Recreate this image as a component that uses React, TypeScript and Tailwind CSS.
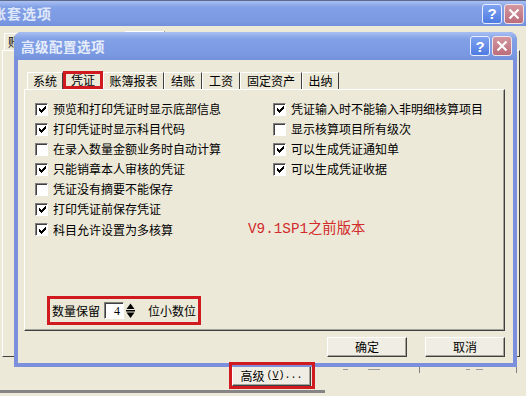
const leftItems = [
  { label: '预览和打印凭证时显示底部信息', on: true },
  { label: '打印凭证时显示科目代码', on: true },
  { label: '在录入数量金额业务时自动计算', on: false },
  { label: '只能销章本人审核的凭证', on: true },
  { label: '凭证没有摘要不能保存', on: false },
  { label: '打印凭证前保存凭证', on: true },
  { label: '科目允许设置为多核算', on: true },
];

const rightItems = [
  { label: '凭证输入时不能输入非明细核算项目', on: true },
  { label: '显示核算项目所有级次', on: false },
  { label: '可以生成凭证通知单', on: true },
  { label: '可以生成凭证收据', on: true },
];

const tabs = [
  { name: '系统', w: 'w-[36px]' },
  { name: '凭证', w: 'w-[40px]', active: true },
  { name: '账簿报表', w: 'w-[61px]' },
  { name: '结账', w: 'w-[38px]' },
  { name: '工资', w: 'w-[38px]' },
  { name: '固定资产', w: 'w-[62px]' },
  { name: '出纳', w: 'w-[37px]' },
];

function CheckBox({ on }: { on: boolean }) {
  return (
    <span className="flex h-[13px] w-[13px] shrink-0 items-center justify-center border border-t-[#808080] border-l-[#808080] border-r-white border-b-white bg-white shadow-[inset_1px_1px_0_#404040]">
      {on && (
        <svg width="7" height="7" viewBox="0 0 7 7" shapeRendering="crispEdges" className="ml-[1px] mt-[1px]">
          <rect x="6" y="0" width="1" height="1" />
          <rect x="5" y="1" width="2" height="1" />
          <rect x="0" y="2" width="1" height="1" />
          <rect x="4" y="2" width="3" height="1" />
          <rect x="0" y="3" width="2" height="1" />
          <rect x="3" y="3" width="3" height="1" />
          <rect x="0" y="4" width="5" height="1" />
          <rect x="1" y="5" width="3" height="1" />
          <rect x="2" y="6" width="1" height="1" />
        </svg>
      )}
    </span>
  );
}

function CheckRow({ label, on }: { label: string; on: boolean }) {
  return (
    <div className="flex h-[20px] items-center gap-[5px] whitespace-nowrap">
      <CheckBox on={on} />
      <span>{label}</span>
    </div>
  );
}

function CaptionButtons() {
  return (
    <div className="flex gap-[2px]">
      <div className="flex h-[20px] w-[20px] items-center justify-center rounded-[3px] border border-[#e8eefc] bg-[linear-gradient(#7fa3f0,#4f7be2)] font-['Liberation_Sans',sans-serif] text-[15px] font-bold leading-none text-white">
        ?
      </div>
      <div className="flex h-[20px] w-[20px] items-center justify-center rounded-[3px] border border-[#f0e4e8] bg-[linear-gradient(#d397a0,#bb6d7a)]">
        <svg width="12" height="12" viewBox="0 0 12 12">
          <path d="M1.5 1.5 L10.5 10.5 M10.5 1.5 L1.5 10.5" stroke="#fff" strokeWidth="2.2" />
        </svg>
      </div>
    </div>
  );
}

function PlainButton({ label }: { label: string }) {
  return (
    <div className="flex h-[20px] w-[80px] items-center justify-center border border-t-white border-l-white border-r-[#404040] border-b-[#404040] bg-[#f0eee4] shadow-[inset_-1px_-1px_0_#a6a49a]">
      {label}
    </div>
  );
}

export default function App() {
  return (
    <div className="relative h-[396px] w-[526px] overflow-hidden bg-[#ece9d8] font-['Noto_Sans_CJK_SC',sans-serif] text-[12px] text-black">
      {/* outer window, inactive */}
      <div className="flex h-full flex-col">
        <div className="flex h-[26px] items-center justify-between border-t border-[#5f6b8c] bg-[linear-gradient(#a9c0f3,#82a0e6_25%,#7b99e2_80%,#7390dc)] pr-[2px]">
          <span className="ml-[-8px] text-[14px] font-bold tracking-[1px] text-[#dfe7fa]">账套选项</span>
          <CaptionButtons />
        </div>

        <div className="flex h-[24px] items-end">
          <div className="ml-[4px] flex h-[17px] w-[121px] items-center border-l border-t border-white pl-[3px]">
            账
          </div>
          <div className="h-[19px] w-[40px] border-t border-r border-t-white border-r-[#404040]" />
        </div>

        <div className="ml-[2px] h-[307px] w-[518px] border border-t-white border-l-white border-r-[#404040] border-b-[#404040]" />

        <div className="mt-[8px] flex items-start">
          <div className="ml-[232px] flex h-[21px] w-[79px] items-center justify-center border border-t-white border-l-white border-r-[#404040] border-b-[#404040] bg-[#f0eee4] shadow-[inset_-1px_-1px_0_#a6a49a]">
            <span>高级</span>
            <span className="ml-[2px] font-['Liberation_Mono',monospace] text-[10px]">
              (<span className="underline">V</span>)...
            </span>
          </div>
          <div className="ml-[31px] mt-[2px] flex h-[6px]">
            <div className="relative h-[6px] w-[78px] border-r border-[#808080]">
              <span className="absolute left-[1px] top-[2px] h-[1px] w-[5px] bg-[#9a9a9a]" />
              <span className="absolute left-[26px] top-[2px] h-[1px] w-[12px] bg-[#9a9a9a]" />
            </div>
            <div className="relative h-[6px] w-[97px] border-r border-[#808080]">
              <span className="absolute left-[46px] top-[2px] h-[1px] w-[4px] bg-[#9a9a9a]" />
              <span className="absolute left-[56px] top-[2px] h-[1px] w-[7px] bg-[#9a9a9a]" />
            </div>
          </div>
        </div>

        <div className="mt-[4px] h-[3px] w-[325px] bg-[#858585]" />
      </div>

      {/* inner dialog */}
      <div className="absolute left-[14px] top-[32px] flex h-[335px] w-[503px] flex-col rounded-t-[8px] bg-[#7b8fdc]">
        <div className="flex h-[28px] items-center justify-between rounded-t-[8px] bg-[linear-gradient(#a9c0f3,#82a0e6_25%,#7b99e2_80%,#7390dc)] pl-[7px] pr-[5px]">
          <span className="text-[13.5px] font-bold tracking-[0.5px] text-[#e6edfb]">高级配置选项</span>
          <CaptionButtons />
        </div>

        <div className="mx-[4px] mb-[4px] flex flex-1 flex-col bg-[#ece9d8] pl-[6px] pt-[11px]">
          {/* tab strip */}
          <div className="flex h-[18px] items-end pl-[3px]">
            {tabs.map((t) =>
              t.active ? (
                <div key={t.name} className={`flex h-[18px] ${t.w} items-center justify-center border-[3px] border-[#d01a20]`}>
                  {t.name}
                </div>
              ) : (
                <div key={t.name} className={`flex h-[17px] ${t.w} items-center justify-center border-l border-r border-t border-l-white border-t-white border-r-[#404040]`}>
                  {t.name}
                </div>
              )
            )}
          </div>

          {/* tab page */}
          <div className="flex h-[242px] w-[481px] flex-col border border-t-white border-l-white border-r-[#404040] border-b-[#404040] pl-[10px] pt-[9px] shadow-[inset_-1px_-1px_0_#a6a49a]">
            <div className="grid grid-cols-[238px_1fr]">
              <div className="flex flex-col">
                {leftItems.slice(0, 6).map((it) => (
                  <CheckRow key={it.label} label={it.label} on={it.on} />
                ))}
                <div className="flex items-center">
                  <div className="w-[213px] shrink-0">
                    <CheckRow label={leftItems[6].label} on={leftItems[6].on} />
                  </div>
                  <span className="shrink-0 whitespace-nowrap font-['Liberation_Mono','Noto_Sans_CJK_SC',monospace] text-[14.3px] text-[#d22b2b]">
                    V9.1SP1之前版本
                  </span>
                </div>
              </div>
              <div className="flex flex-col">
                {rightItems.map((it) => (
                  <CheckRow key={it.label} label={it.label} on={it.on} />
                ))}
              </div>
            </div>

            <div className="mb-[5px] ml-[12px] mt-auto flex h-[29px] w-[154px] items-center border-[3px] border-[#d01a20] pl-[2px]">
              <span>数量保留</span>
              <div className="ml-[4px] flex h-[17px] w-[20px] items-center justify-end border border-t-[#808080] border-l-[#808080] border-r-white border-b-white bg-white pr-[3px] font-['Liberation_Serif',serif] text-[12px] shadow-[inset_1px_1px_0_#404040]">
                4
              </div>
              <svg width="9" height="16" viewBox="0 0 9 16" className="ml-[2px]">
                <polygon points="4.5,0.5 0.5,6 8.5,6" fill="#000" />
                <rect x="0" y="7" width="9" height="1.5" fill="#000" />
                <polygon points="0.5,9.5 8.5,9.5 4.5,15" fill="#000" />
              </svg>
              <span className="ml-[13px]">位小数位</span>
            </div>
          </div>

          <div className="mt-[6px] flex justify-end gap-[18px] pr-[8px]">
            <PlainButton label="确定" />
            <PlainButton label="取消" />
          </div>
        </div>
      </div>

      {/* annotation box */}
      <div className="absolute left-[229px] top-[362px] h-[27px] w-[86px] border-[3px] border-[#d01a20]" />
    </div>
  );
}
